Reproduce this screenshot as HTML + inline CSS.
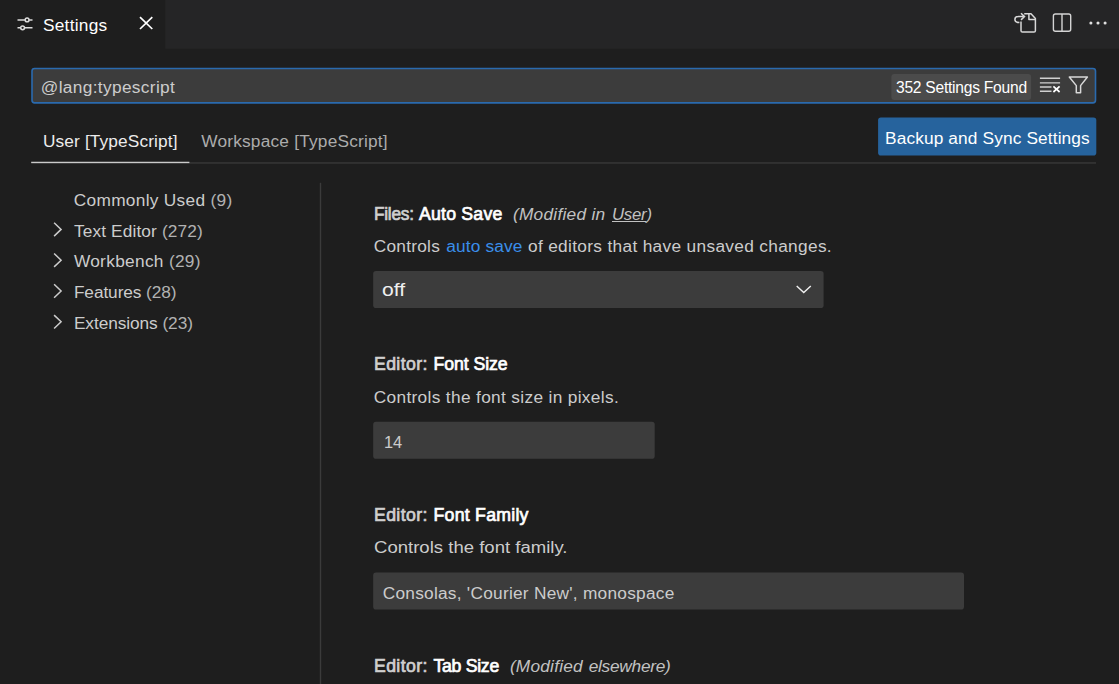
<!DOCTYPE html>
<html><head><meta charset="utf-8"><title>Settings</title>
<style>
html,body{margin:0;padding:0;background:#1e1e1e;}
body{width:1119px;height:684px;position:relative;overflow:hidden;font-family:"Liberation Sans",sans-serif;}
.t{position:absolute;white-space:pre;line-height:normal;margin:0;padding:0;transform-origin:0 50%;}
.b{position:absolute;}
.c{opacity:.85}
.l{color:#3a8eea}
svg{position:absolute;overflow:visible}
</style></head><body>
<!-- tab bar -->
<!-- search box -->
<!-- button -->
<!-- header border -->
<!-- sash -->
<!-- controls -->
<!--ICONS_START--><svg width="1119" height="684" viewBox="0 0 1119 684" style="left:0;top:0" fill="none" stroke-linecap="butt" stroke-linejoin="miter">
<rect id="tabbar" x="165.3" y="0" width="954" height="48.7" fill="#252526"/>
<rect id="sbox" x="32" y="68.5" width="1063.5" height="34.4" rx="2.6" fill="#3c3c3c" stroke="#2a6aae" stroke-width="1.6"/>
<rect id="btn_r" x="878.1" y="117.6" width="218.2" height="38" rx="2.8" fill="#26639d"/>
<rect id="hline" x="31.2" y="162.25" width="1064.8" height="1.4" fill="#393939"/>
<rect id="uline" x="31.2" y="161.75" width="158.2" height="1.35" fill="#cacaca"/>
<rect id="sash" x="319.8" y="182.8" width="1.4" height="502" fill="#3b3b3b"/>
<rect id="sel" x="373.2" y="271" width="450.4" height="37" rx="2.8" fill="#3c3c3c"/>
<rect id="in2" x="373.2" y="421.8" width="281.5" height="36.9" rx="2.8" fill="#3c3c3c"/>
<rect id="in3" x="373.2" y="572.4" width="590.8" height="37.1" rx="2.8" fill="#3c3c3c"/>
<rect id="badge" x="891.4" y="73.9" width="139.7" height="26.1" rx="3" fill="#4b4b4b"/>
<!-- tab settings icon -->
<g stroke="#dcdcdc" stroke-width="1.5">
<path d="M17.5 19.9H25.2M29 19.9H32.5M17.5 27.8H20.7M24.5 27.8H32.5"/>
<circle cx="27.1" cy="19.9" r="1.9"/><circle cx="22.6" cy="27.8" r="1.9"/>
</g>
<!-- close X -->
<path d="M140 17.2L152.3 29M152.3 17.2L140 29" stroke="#ffffff" stroke-width="1.7"/>
<!-- open settings json -->
<g stroke="#d8d8d8" stroke-width="1.5" stroke-linejoin="round">
<path d="M1021 21.6V30.7Q1021 32.1 1022.4 32.1H1034Q1035.4 32.1 1035.4 30.7V18.5L1031 13.8H1024.2"/>
<path d="M1028.9 13.8V19.4H1035.4"/>
<path d="M1019.4 22.6C1016.5 22.6 1014.9 21.3 1014.9 19.5C1014.9 17.7 1016.3 16.6 1018.5 16.6H1024"/>
<path d="M1021 13.3L1024.5 16.6L1021 19.9" stroke-linejoin="miter"/>
</g>
<!-- split editor -->
<g stroke="#d4d4d4" stroke-width="1.4">
<rect x="1053.4" y="14" width="17.3" height="17.2" rx="2"/>
<path d="M1062 14V31.2"/>
</g>
<!-- more -->
<g fill="#e0e0e0" stroke="none"><circle cx="1090.9" cy="23.05" r="1.55"/><circle cx="1098" cy="23.05" r="1.55"/><circle cx="1105.1" cy="23.05" r="1.55"/></g>
<!-- clear search -->
<g stroke="#d0d0d0" stroke-width="1.4">
<path d="M1039.9 78.2H1060.1M1039.9 82.85H1060.1M1039.9 86.95H1051.5M1039.9 91.25H1051.5"/>
<path d="M1053.4 86.4L1059.6 92M1059.6 86.4L1053.4 92" stroke="#ffffff" stroke-width="1.7"/>
</g>
<!-- filter -->
<path d="M1069.3 77H1087.4L1080.6 85.6V92.7H1076.3V85.6Z" stroke="#d8d8d8" stroke-width="1.5" stroke-linejoin="round"/>
<!-- toc chevrons -->
<g stroke="#cccccc" stroke-width="1.5">
<path d="M54.1 222.7L61.1 229.4L54.1 236.1"/>
<path d="M54.1 253.5L61.1 260.2L54.1 266.9"/>
<path d="M54.1 284.3L61.1 291L54.1 297.7"/>
<path d="M54.1 315.1L61.1 321.8L54.1 328.5"/>
</g>
<!-- select chevron -->
<path d="M796.7 285.9L803.75 292.6L810.8 285.9" stroke="#f0f0f0" stroke-width="1.4"/>
</svg>
<!--ICONS_END-->
<div class="t" id="tabt" style="left:42.9px;top:15.00px;font-size:17.3px;color:#ffffff;letter-spacing:0.273px;">Settings</div>
<div class="t" id="srch" style="left:40.8px;top:77.00px;font-size:17.3px;color:#cccccc;letter-spacing:0.337px;">@lang:typescript</div>
<div class="t" id="cnt" style="left:896.1px;top:79.00px;font-size:16px;color:#ffffff;letter-spacing:-0.250px;transform:scaleX(0.9742);">352 Settings Found</div>
<div class="t" id="usr" style="left:43px;top:131.00px;font-size:17.3px;color:#ececec;letter-spacing:0.119px;">User [TypeScript]</div>
<div class="t" id="wsp" style="left:201.2px;top:131.00px;font-size:17.3px;color:#acacac;letter-spacing:0.206px;">Workspace [TypeScript]</div>
<div class="t" id="btn" style="left:885px;top:128.00px;font-size:17.3px;color:#ffffff;letter-spacing:0.130px;">Backup and Sync Settings</div>
<div class="t" id="t1" style="left:73.8px;top:190.00px;font-size:17.3px;color:#cccccc;letter-spacing:0.294px;">Commonly Used <span class="c">(9)</span></div>
<div class="t" id="t2" style="left:73.9px;top:221.00px;font-size:17.3px;color:#cccccc;letter-spacing:0.134px;">Text Editor <span class="c">(272)</span></div>
<div class="t" id="t3" style="left:73.9px;top:251.00px;font-size:17.3px;color:#cccccc;letter-spacing:0.308px;">Workbench <span class="c">(29)</span></div>
<div class="t" id="t4" style="left:73.9px;top:282.00px;font-size:17.3px;color:#cccccc;letter-spacing:-0.091px;">Features <span class="c">(28)</span></div>
<div class="t" id="t5" style="left:73.9px;top:313.00px;font-size:17.3px;color:#cccccc;letter-spacing:-0.074px;">Extensions <span class="c">(23)</span></div>
<div class="t" id="s1a" style="left:373.6px;top:204.00px;font-size:17.7px;color:#cfcfcf;-webkit-text-stroke:0.7px #cfcfcf;letter-spacing:-0.250px;transform:scaleX(0.9739);">Files:</div>
<div class="t" id="s1b" style="left:419px;top:204.00px;font-size:17.7px;color:#ffffff;-webkit-text-stroke:0.7px #ffffff;letter-spacing:0.209px;">Auto Save</div>
<div class="t" id="s1c" style="left:512.9px;top:204.00px;font-size:17.3px;color:#c2c2c2;font-style:italic;letter-spacing:0.267px;">(Modified in</div>
<div class="t" id="s1c2" style="left:611.7px;top:204.00px;font-size:17.3px;color:#c2c2c2;font-style:italic;letter-spacing:-0.250px;transform:scaleX(0.9704);"><u>User</u>)</div>
<div class="t" id="s1d" style="left:373.7px;top:236.00px;font-size:17.3px;color:#cccccc;letter-spacing:0.259px;">Controls</div>
<div class="t" id="s1d2" style="left:446.25px;top:236.00px;font-size:17.3px;color:#3a8eea;letter-spacing:0.153px;">auto save</div>
<div class="t" id="s1d3" style="left:528px;top:236.00px;font-size:17.3px;color:#cccccc;letter-spacing:0.322px;">of editors that have unsaved changes.</div>
<div class="t" id="s1e" style="left:382.3px;top:279.00px;font-size:18.6px;color:#f0f0f0;transform:scaleX(1.1355);">off</div>
<div class="t" id="s2a" style="left:374.0px;top:354.00px;font-size:17.7px;color:#cfcfcf;-webkit-text-stroke:0.7px #cfcfcf;letter-spacing:0.365px;">Editor:</div>
<div class="t" id="s2b" style="left:433.6px;top:354.00px;font-size:17.7px;color:#ffffff;-webkit-text-stroke:0.7px #ffffff;letter-spacing:-0.085px;">Font Size</div>
<div class="t" id="s2d" style="left:373.7px;top:387.00px;font-size:17.3px;color:#cccccc;letter-spacing:0.333px;">Controls the font size in pixels.</div>
<div class="t" id="s2e" style="left:384.0px;top:432.00px;font-size:17.3px;color:#cccccc;letter-spacing:-0.250px;transform:scaleX(0.9501);">14</div>
<div class="t" id="s3a" style="left:374.0px;top:505.00px;font-size:17.7px;color:#cfcfcf;-webkit-text-stroke:0.7px #cfcfcf;letter-spacing:0.365px;">Editor:</div>
<div class="t" id="s3b" style="left:433.5px;top:505.00px;font-size:17.7px;color:#ffffff;-webkit-text-stroke:0.7px #ffffff;letter-spacing:0.258px;">Font Family</div>
<div class="t" id="s3d" style="left:373.7px;top:537.00px;font-size:17.3px;color:#cccccc;transform:scaleX(1.0735);">Controls the font family.</div>
<div class="t" id="s3e" style="left:382.7px;top:583.00px;font-size:17.3px;color:#cccccc;letter-spacing:0.253px;">Consolas, 'Courier New', monospace</div>
<div class="t" id="s4a" style="left:374.0px;top:656.00px;font-size:17.7px;color:#cfcfcf;-webkit-text-stroke:0.7px #cfcfcf;letter-spacing:0.365px;">Editor:</div>
<div class="t" id="s4b" style="left:433.5px;top:656.00px;font-size:17.7px;color:#ffffff;-webkit-text-stroke:0.7px #ffffff;letter-spacing:-0.299px;">Tab Size</div>
<div class="t" id="s4c" style="left:509.9px;top:656.00px;font-size:17.3px;color:#c2c2c2;font-style:italic;letter-spacing:0.214px;">(Modified</div>
<div class="t" id="s4c2" style="left:588.7px;top:656.00px;font-size:17.3px;color:#c2c2c2;font-style:italic;letter-spacing:-0.266px;">elsewhere)</div>
</body></html>
